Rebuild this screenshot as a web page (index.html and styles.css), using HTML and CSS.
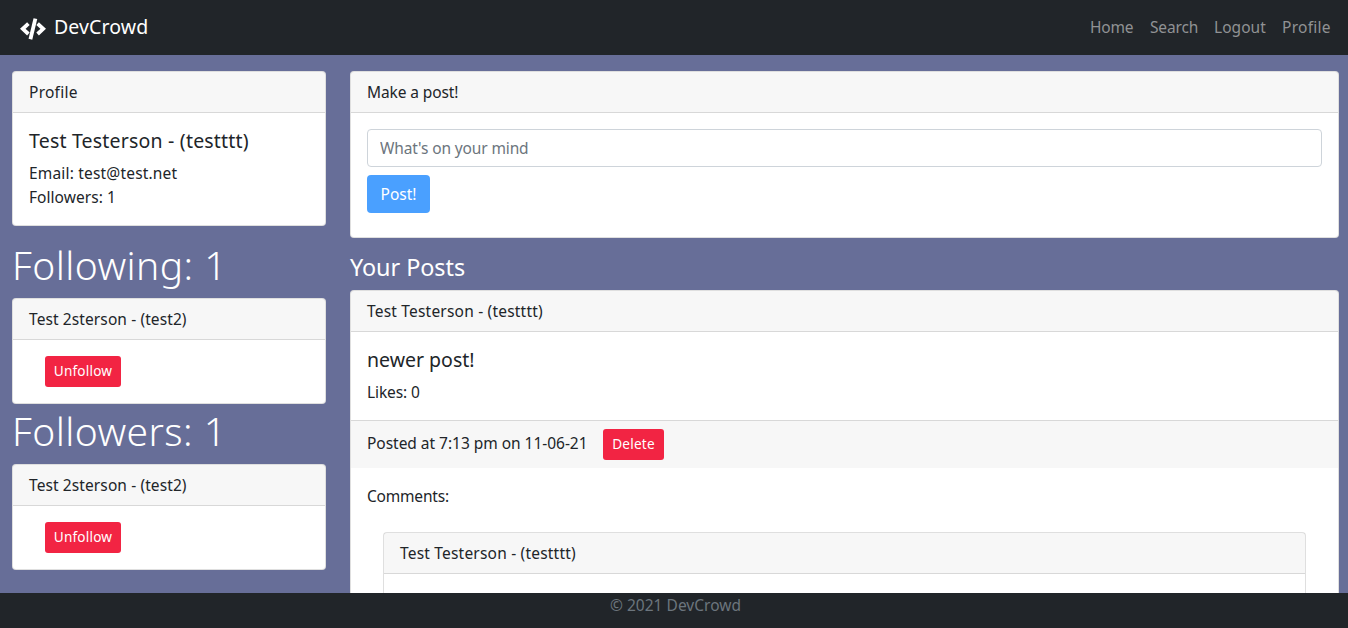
FILE: index.html
```html
<!DOCTYPE html>
<html lang="en">
<head>
<meta charset="utf-8">
<title>DevCrowd</title>
<link rel="stylesheet" href="styles.css">
</head>
<body>
<nav class="navbar">
  <a class="brand" href="#">
    <svg class="brand-icon" width="26" height="22" viewBox="0 0 26 22" fill="none" stroke="#fff" stroke-width="3.8">
      <path d="M8.4 5.6 2.8 10.8 8.4 16M17.6 5.6 23.2 10.8 17.6 16"/>
      <path d="M15.4 .6 10.4 21.2"/>
    </svg>
    <span class="brand-name">DevCrowd</span>
  </a>
  <div class="nav-links">
    <a class="nav-home" href="#">Home</a>
    <a class="nav-search" href="#">Search</a>
    <a class="nav-logout" href="#">Logout</a>
    <a class="nav-profile" href="#">Profile</a>
  </div>
</nav>
<main class="layout">
  <aside class="sidebar">
    <section class="card">
      <div class="card-header profile">Profile</div>
      <div class="card-body">
        <h5 class="card-title">Test Testerson - (testttt)</h5>
        <p class="card-text email">Email: test@test.net</p>
        <p class="card-text count">Followers: 1</p>
      </div>
    </section>
    <h1 class="display following">Following: 1</h1>
    <section class="card">
      <div class="card-header user">Test 2sterson - (test2)</div>
      <div class="card-body indented"><button class="btn btn-sm btn-danger unfollow">Unfollow</button></div>
    </section>
    <h1 class="display followers">Followers: 1</h1>
    <section class="card">
      <div class="card-header user">Test 2sterson - (test2)</div>
      <div class="card-body indented"><button class="btn btn-sm btn-danger unfollow">Unfollow</button></div>
    </section>
  </aside>
  <div class="feed">
    <section class="card">
      <div class="card-header make">Make a post!</div>
      <form class="card-body post-form">
        <input class="form-control" type="text" placeholder="What's on your mind">
        <button class="btn btn-primary" type="button">Post!</button>
      </form>
    </section>
    <h4 class="feed-title">Your Posts</h4>
    <article class="card">
      <div class="card-header author">Test Testerson - (testttt)</div>
      <div class="card-body">
        <h5 class="card-title post-title">newer post!</h5>
        <p class="card-text likes">Likes: 0</p>
      </div>
      <div class="card-footer">
        <span class="posted">Posted at 7:13 pm on 11-06-21</span>
        <button class="btn btn-sm btn-danger delete">Delete</button>
      </div>
      <div class="card-body">
        <p class="card-text comments-label">Comments:</p>
        <div class="comment card">
          <div class="card-header author">Test Testerson - (testttt)</div>
          <div class="card-body comment-body"></div>
        </div>
      </div>
    </article>
  </div>
</main>
<footer class="page-footer"><span>© 2021 DevCrowd</span></footer>
</body>
</html>
```

FILE: styles.css
```css
* { box-sizing: border-box; }

body {
  margin: 0;
  height: 100vh;
  display: flex;
  flex-direction: column;
  overflow: hidden;
  background: #676e98;
  color: #212529;
  font: 15.5px/24px "Noto Sans", "Open Sans", sans-serif;
  letter-spacing: -0.3px;
}

h1, h4, h5, p { margin: 0; }
a { text-decoration: none; }

.navbar {
  flex: none;
  height: 55px;
  padding: 0 17px 2px 20px;
  display: flex;
  align-items: center;
  justify-content: space-between;
  background: #212529;
}
.brand { display: flex; align-items: center; gap: 8px; color: #fff; font-size: 19.5px; line-height: 30px; letter-spacing: .1px; }
.brand-icon { margin-top: 5px; }
.nav-links { display: flex; gap: 16px; color: #909294; }
.nav-links a { color: inherit; white-space: nowrap; }
.nav-home { width: 44px; letter-spacing: -.2px; }
.nav-search { width: 48px; letter-spacing: -.15px; }
.nav-logout { width: 52px; letter-spacing: .05px; }
.nav-profile { width: 49px; letter-spacing: .27px; }

.layout {
  flex: 1;
  min-height: 0;
  overflow: hidden;
  padding: 16px 9px 0 12px;
  display: grid;
  grid-template-columns: 314px 1fr;
  gap: 24px;
}

.card { background: #fff; background-clip: border-box; border: 1px solid rgba(0, 0, 0, .125); border-radius: 4px; }
.card-header {
  padding: 8px 16px;
  background: rgba(0, 0, 0, .03);
  border-bottom: 1px solid rgba(0, 0, 0, .125);
}
.card-body { padding: 16px; }
.card-title { margin-bottom: 8px; font-size: 19.5px; line-height: 24px; font-weight: 400; letter-spacing: .2px; }
.indented { padding-left: 32px; }
.profile { letter-spacing: .25px; }
.email { letter-spacing: .18px; }
.count { letter-spacing: .05px; }
.user { letter-spacing: .1px; }
.make { letter-spacing: -.1px; }
.author { letter-spacing: .2px; }
.post-title { letter-spacing: 0; }
.likes { letter-spacing: -.1px; }
.comments-label { letter-spacing: -.2px; }

.display { margin-bottom: 9px; color: #fff; font-size: 39px; line-height: 48px; font-weight: 300; letter-spacing: .45px; white-space: nowrap; }
.following { margin-top: 15px; }
.followers { margin-top: 3px; }

.btn {
  display: block;
  padding: 7px 0;
  border: 0;
  border-radius: 4px;
  color: #fff;
  font: inherit;
  letter-spacing: 0;
  text-align: center;
}
.btn-primary { width: 63px; background: #4aa0ff; }
.btn-sm { height: 31px; padding: 0 0 2px; font-size: 13.6px; line-height: 29px; letter-spacing: .2px; border-radius: 3px; }
.btn-danger { background: #f22443; }
.unfollow { width: 76px; }
.delete { width: 61px; }

.post-form { display: flex; flex-direction: column; align-items: flex-start; gap: 8px; padding-bottom: 24px; }
.form-control {
  width: 100%;
  height: 38px;
  padding: 6px 12px;
  border: 1px solid #ced4da;
  border-radius: 4px;
  font: inherit;
  letter-spacing: -.13px;
}
.form-control::placeholder { color: #6c757d; opacity: 1; }

.feed-title { margin: 15px 0 9px; color: #fff; font-size: 23.4px; line-height: 28px; font-weight: 400; letter-spacing: -.05px; }

.card-footer {
  padding: 8px 16px;
  display: flex;
  align-items: flex-start;
  gap: 16px;
  background: rgba(0, 0, 0, .03);
  border-top: 1px solid rgba(0, 0, 0, .125);
}
.posted { width: 220px; padding-top: 2px; letter-spacing: -.03px; white-space: nowrap; }
.comment { margin: 24px 16px 0; }
.comment-body { height: 80px; }

.page-footer {
  flex: none;
  height: 35px;
  padding-left: 3px;
  background: #212529;
  color: #6c757d;
  letter-spacing: .03px;
  text-align: center;
}
```
